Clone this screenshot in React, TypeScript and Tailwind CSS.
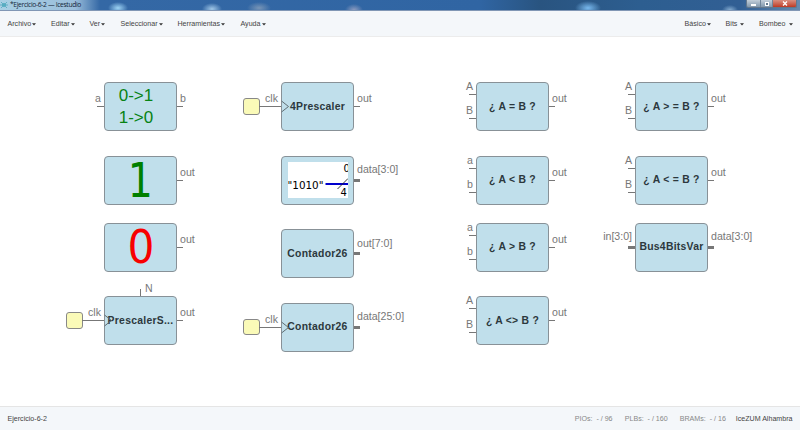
import type { ReactNode } from "react";

type Pin = { label: string; y: number; bus?: boolean };

type NodeProps = {
  x: number;
  y: number;
  name?: string;
  inputs?: Pin[];
  outputs?: Pin[];
  clock?: boolean;
  top?: string;
  children?: ReactNode;
};

const menus = [
  { label: "Archivo", x: "w-[43.5px]" },
  { label: "Editar", x: "w-[38.5px]" },
  { label: "Ver", x: "w-[31px]" },
  { label: "Seleccionar", x: "w-[57px]" },
  { label: "Herramientas", x: "w-[63px]" },
  { label: "Ayuda", x: "w-[30px]" },
];

function Caret() {
  return (
    <svg className="mt-px ml-px h-[3px] w-[4px]" viewBox="0 0 4 3" fill="#333">
      <path d="M0 0.2H4L2 2.6Z" />
    </svg>
  );
}

function BlockNode({ x, y, name, inputs = [], outputs = [], clock, top, children }: NodeProps) {
  return (
    <div className="absolute h-[49px] w-[73px] text-[10.6px] leading-[12px] text-[#777]" style={{ left: x, top: y }}>
      {inputs.map((p) => (
        <div key={p.label}>
          <span className="absolute right-[76px] whitespace-nowrap" style={{ top: p.bus ? p.y - 16.5 : p.y - 14 }}>{p.label}</span>
          <span
            className={p.bus ? "absolute -left-[7px] h-[3px] w-[7px] bg-[#777]" : "absolute -left-[7px] h-px w-[7px] bg-[#777]"}
            style={{ top: p.bus ? p.y - 1 : p.y }}
          />
        </div>
      ))}
      {outputs.map((p) => (
        <div key={p.label}>
          <span className="absolute left-[76px] whitespace-nowrap" style={{ top: p.bus ? p.y - 16.5 : p.y - 14 }}>{p.label}</span>
          <span
            className={p.bus ? "absolute left-[73px] h-[3px] w-[6px] bg-[#777]" : "absolute left-[73px] h-px w-[6px] bg-[#777]"}
            style={{ top: p.bus ? p.y - 1 : p.y }}
          />
        </div>
      ))}
      {top && (
        <>
          <span className="absolute -top-[7px] left-[36px] h-[7px] w-px bg-[#777]" />
          <span className="absolute -top-[14.5px] left-[41px]">{top}</span>
        </>
      )}
      {clock && (
        <>
          <span className="absolute top-[16px] -left-[38px] size-[16.5px] rounded-[3px] border border-[#888] bg-[#fafab8]" />
          <span className="absolute top-[24px] -left-[22px] h-px w-[22px] bg-[#777]" />
          <span className="absolute top-[10px] right-[76px]">clk</span>
        </>
      )}
      <div className="relative flex h-full w-full items-center justify-center rounded-[4px] border border-[#889197] bg-[#c0dfeb]">
        {name && (
          <span className="text-[10.4px] font-bold tracking-[0.26px] whitespace-nowrap text-[#2c383d]">{name}</span>
        )}
        {children}
      </div>
      {clock && (
        <svg className="absolute top-[18px] left-0 h-[13px] w-[9px]" viewBox="0 0 9 13" fill="none" stroke="#5f6d73">
          <path d="M0.5 1L7.5 6.5L0.5 12" />
        </svg>
      )}
    </div>
  );
}

const out: Pin[] = [{ label: "out", y: 24 }];
const ab: Pin[] = [{ label: "a", y: 12 }, { label: "b", y: 36 }];
const AB: Pin[] = [{ label: "A", y: 12 }, { label: "B", y: 36 }];

export default function App() {
  return (
    <div className="flex h-[430px] w-[800px] flex-col overflow-hidden bg-white font-['Liberation_Sans',Arial,sans-serif]">
      <header className="flex h-[11px] shrink-0 items-start justify-between border-b border-[#8197b5] bg-[radial-gradient(ellipse_10px_6px_at_118px_8px,#9ed4f5,transparent),radial-gradient(ellipse_10px_6px_at_212px_9px,#a1c8e8,transparent),radial-gradient(ellipse_12px_6px_at_259px_8px,#7895b7,transparent),radial-gradient(ellipse_9px_6px_at_354px_10px,#8e9cc0,transparent),radial-gradient(ellipse_13px_7px_at_588px_8px,#79b9ee,transparent),radial-gradient(ellipse_8px_5px_at_730px_10px,#86add1,transparent),linear-gradient(90deg,#a7cfe4_0,#9bbedb_75px,#3468a5_100px,#3065a3_480px,#295480_540px,#2d5e90_640px,#315f94_740px,#668bb0_800px)]">
        <div className="flex h-[10px] items-center">
          <svg className="h-[8px] w-[8px]" viewBox="0 0 8 8" fill="none" stroke="#4da8bd" strokeWidth="0.8">
            <path d="M1 1L7 7M7 1L1 7M0 4H8M4 2L6 4L4 6L2 4Z" />
          </svg>
          <span className="ml-[2px] font-['Open_Sans'] text-[6.7px] leading-[10px] tracking-[-0.34px] whitespace-nowrap text-[#142538]">*Ejercicio-6-2 — Icestudio</span>
        </div>
        <div className="mr-[3px] flex h-[8px] overflow-hidden rounded-b-[2px] border border-t-0 border-[#63778c]">
          <div className="flex w-[14px] items-center justify-center border-r border-[#71859a] bg-linear-to-b from-[#c3cfda] to-[#8298ac]">
            <span className="mt-[2px] h-[2px] w-[5px] bg-white" />
          </div>
          <div className="flex w-[12px] items-center justify-center border-r border-[#71859a] bg-linear-to-b from-[#c3cfda] to-[#8298ac]">
            <span className="size-[4px] border border-white bg-[#64788b]" />
          </div>
          <div className="flex w-[23px] items-center justify-center bg-linear-to-b from-[#d88e80] to-[#bd3822]">
            <svg className="h-[5px] w-[6px]" viewBox="0 0 6 5" stroke="#fff" strokeWidth="1.3"><path d="M1 0.5L5 4.5M5 0.5L1 4.5" /></svg>
          </div>
        </div>
      </header>

      <nav className="flex h-[26px] shrink-0 items-center border-b border-[#ececec] bg-[#f4f7fa] pt-px pl-[7.5px] text-[7.1px] text-[#444]">
        {menus.map((m) => (
          <div key={m.label} className={`flex shrink-0 items-center whitespace-nowrap ${m.x}`}>
            {m.label}<Caret />
          </div>
        ))}
        <div className="ml-auto flex items-center pr-[7.5px] whitespace-nowrap">
          <div className="flex w-[41px] items-center">Básico<Caret /></div>
          <div className="flex w-[33.5px] items-center">Bits<span className="w-[2px]" /><Caret /></div>
          <div className="flex items-center">Bombeo<span className="w-[2px]" /><Caret /></div>
        </div>
      </nav>

      <main className="relative min-h-0 flex-1">
        <BlockNode x={104} y={45} inputs={[{ label: "a", y: 24 }]} outputs={[{ label: "b", y: 24 }]}>
          <div className="mr-[9px] mt-px text-[17px] leading-[22px] text-[#078313]">
            <div>0-&gt;1</div>
            <div>1-&gt;0</div>
          </div>
        </BlockNode>
        <BlockNode x={104} y={118.5} outputs={out}>
          <span className="scale-x-[0.82] font-['DejaVu_Sans'] text-[48px] leading-[48px] text-[#008000]">1</span>
        </BlockNode>
        <BlockNode x={104} y={185.5} outputs={out}>
          <span className="scale-x-90 font-['DejaVu_Sans'] text-[47px] leading-[48px] text-[#f80000]">0</span>
        </BlockNode>
        <BlockNode x={104} y={259} name="PrescalerS..." outputs={out} clock top="N" />

        <BlockNode x={281} y={45} name="4Prescaler" outputs={out} clock />
        <BlockNode x={281} y={118.5} outputs={[{ label: "data[3:0]", y: 24, bus: true }]}>
          <div className="relative h-[36px] w-[60px] overflow-hidden bg-white font-['DejaVu_Sans'] text-[10px] leading-[12px] text-black">
            <span className="absolute top-[16.5px] left-0 text-[10.4px]">"1010"</span>
            <span className="absolute top-px left-[56px]">0</span>
            <span className="absolute top-[25px] left-[53px]">4</span>
            <svg className="absolute top-0 left-0 h-[36px] w-[60px]" viewBox="0 0 60 36">
              <path d="M37.5 22H60" stroke="#0000cd" strokeWidth="2" />
              <path d="M49.5 27L60 16.5" stroke="#222" strokeWidth="0.9" />
            </svg>
          </div>
        </BlockNode>
        <BlockNode x={281} y={192} name="Contador26" outputs={[{ label: "out[7:0]", y: 24, bus: true }]} />
        <BlockNode x={281} y={265.5} name="Contador26" outputs={[{ label: "data[25:0]", y: 24, bus: true }]} clock />

        <BlockNode x={476} y={45} name="¿ A = B ?" inputs={AB} outputs={out} />
        <BlockNode x={476} y={118.5} name="¿ A < B ?" inputs={ab} outputs={out} />
        <BlockNode x={476} y={185.5} name="¿ A > B ?" inputs={ab} outputs={out} />
        <BlockNode x={476} y={259} name="¿ A <> B ?" inputs={AB} outputs={out} />

        <BlockNode x={635} y={45} name="¿ A > = B ?" inputs={AB} outputs={out} />
        <BlockNode x={635} y={118.5} name="¿ A < = B ?" inputs={AB} outputs={out} />
        <BlockNode x={635} y={185.5} name="Bus4BitsVar" inputs={[{ label: "in[3:0]", y: 24, bus: true }]} outputs={[{ label: "data[3:0]", y: 24, bus: true }]} />
      </main>

      <footer className="flex h-[24px] shrink-0 items-center border-t border-[#e5e5e5] bg-[#f4f7fa] px-[7.5px] pt-px text-[7.1px] whitespace-nowrap text-[#444]">
        <span>Ejercicio-6-2</span>
        <div className="ml-auto flex text-[#888]">
          <span className="w-[50px]">PIOs: &nbsp;- / 96</span>
          <span className="w-[55px]">PLBs: &nbsp;- / 160</span>
          <span className="w-[56px]">BRAMs: &nbsp;- / 16</span>
          <span className="text-[#444]">IceZUM Alhambra</span>
        </div>
      </footer>
    </div>
  );
}
